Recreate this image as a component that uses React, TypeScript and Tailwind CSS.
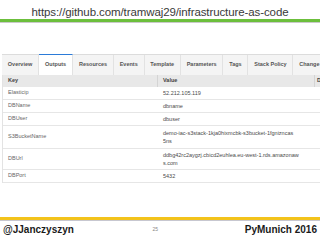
import React from "react"

const tabs = ["Overview", "Outputs", "Resources", "Events", "Template", "Parameters", "Tags", "Stack Policy", "Change Sets"]

const rows = [
  { key: "Elasticip", value: ["52.212.105.119"], h: "h-[13px]" },
  { key: "DBName", value: ["dbname"], h: "h-[13px]" },
  { key: "DBUser", value: ["dbuser"], h: "h-[13px]" },
  { key: "S3BucketName", value: ["demo-iac-s3stack-1kja0hixmcbk-s3bucket-1fgnizncas", "5ns"], h: "h-[23px]" },
  { key: "DBUrl", value: ["ddbg42rc2aygzj.cbicd2euhlea.eu-west-1.rds.amazonaw", "s.com"], h: "h-[21px]" },
  { key: "DBPort", value: ["5432"], h: "h-[13px]" },
]

export default function App() {
  return (
    <div className="w-[320px] h-[240px] bg-white overflow-hidden flex flex-col font-['Liberation_Sans',Arial,sans-serif]">
      {/* slide title */}
      <div className="h-[18px] shrink-0 flex items-end justify-center text-[11.5px] leading-none text-[#3a3a3a] tracking-[-0.1px]">
        https://github.com/tramwaj29/infrastructure-as-code
      </div>
      <div className="mt-[1px] h-[3px] shrink-0 bg-[#6cbf3c]" />
      <div className="h-[1px] shrink-0 bg-[#c9c9c9]" />

      {/* console screenshot */}
      <div className="mt-[31px] ml-[2px] w-[340px] shrink-0 flex flex-col text-[5.5px] leading-none">
        <div className="h-[21px] flex items-stretch bg-[#f4f4f4] border-t border-[#dcdcdc] text-[#555] font-bold">
          {tabs.map((t) => (
            <div
              key={t}
              className={
                t === "Outputs"
                  ? "shrink-0 whitespace-nowrap px-[6px] flex items-center bg-white border-t-[1.5px] border-[#2b7bd8] -mt-[1px] border-r border-r-[#e2e2e2]"
                  : "shrink-0 whitespace-nowrap px-[5.8px] flex items-center border-r border-[#e2e2e2]"
              }
            >
              {t}
            </div>
          ))}
        </div>
        <div className="flex flex-col border-l border-[#e3e3e3]">
          <div className="h-[12px] flex bg-[#e8e8e8] text-[#444] font-bold">
            <div className="w-[155px] shrink-0 pl-[5px] flex items-center border-r border-[#d4d4d4]">Key</div>
            <div className="w-[157px] shrink-0 pl-[5px] flex items-center border-r border-[#d4d4d4]">Value</div>
            <div className="pl-[2px] flex items-center whitespace-nowrap">Description</div>
          </div>
          {rows.map((r) => (
            <div key={r.key} className={`${r.h} flex border-b border-[#e6e6e6] text-[#666]`}>
              <div className="w-[155px] shrink-0 pl-[5px] flex items-center">{r.key}</div>
              <div className="w-[157px] shrink-0 pl-[5px] flex flex-col justify-center leading-[8.5px] text-[#4a4a4a]">
                {r.value.map((v) => (
                  <span key={v} className="whitespace-nowrap">{v}</span>
                ))}
              </div>
            </div>
          ))}
        </div>
      </div>

      <div className="flex-1" />

      {/* footer */}
      <div className="h-[3px] shrink-0 bg-[#f3c31b]" />
      <div className="h-[1px] shrink-0 bg-[#c7c7d0]" />
      <div className="h-[19px] shrink-0 flex items-center justify-between pl-[3px] pr-[3px] pb-[2px]">
        <span className="text-[10px] font-bold text-[#1a1a1a]">@JJanczyszyn</span>
        <span className="text-[5px] text-[#888] mr-[8px]">25</span>
        <span className="text-[10px] font-bold text-[#1a1a1a]">PyMunich 2016</span>
      </div>
    </div>
  )
}
